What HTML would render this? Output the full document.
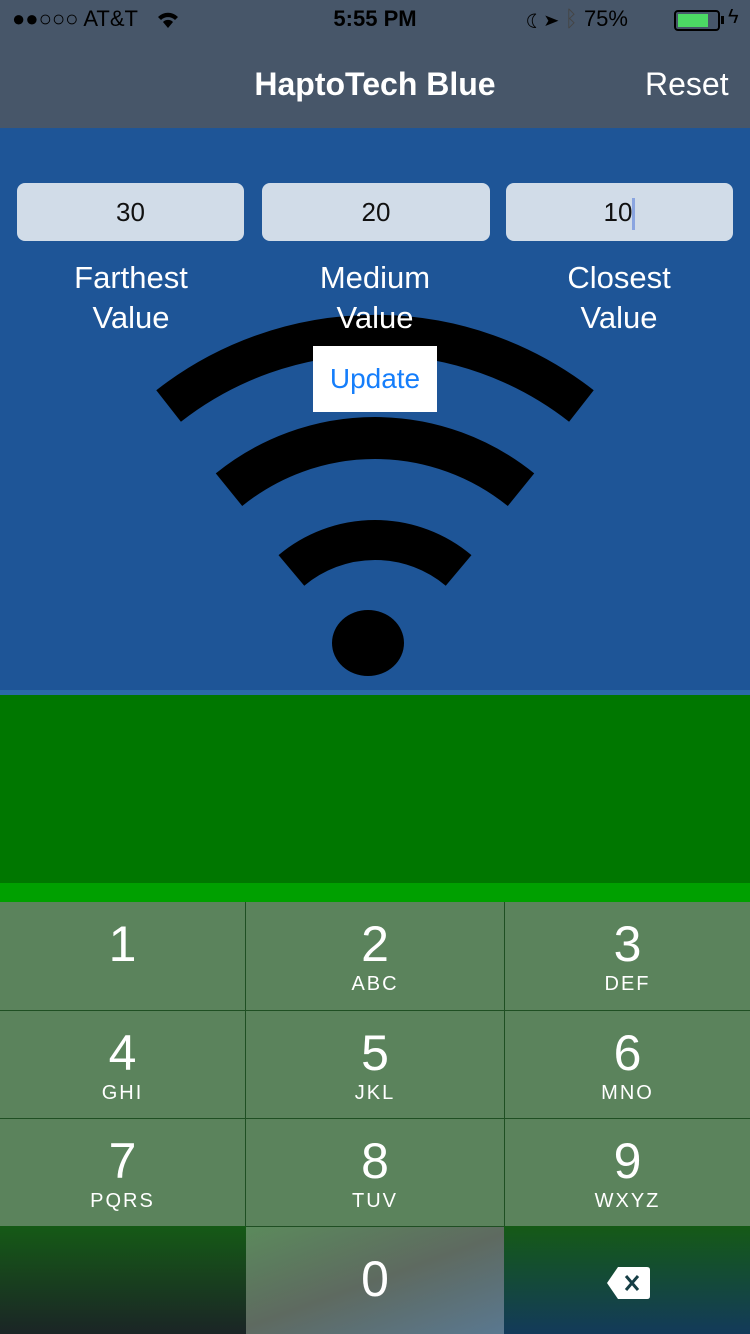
<!DOCTYPE html>
<html><head><meta charset="utf-8"><style>
*{margin:0;padding:0;box-sizing:border-box}
body{width:750px;height:1334px;overflow:hidden;font-family:"Liberation Sans",sans-serif;position:relative;background:#1e5597}
.abs{position:absolute}
.status{left:0;top:0;width:750px;height:128px;background:#475669}
.fld{top:183px;height:58px;background:#d1dce8;border-radius:8px;font-size:26px;text-align:center;line-height:58px;color:#111}
.lbl{top:258px;width:230px;text-align:center;color:#fff;font-size:31px;line-height:40px}
.key{background:#5b835c;color:#fff;text-align:center}
.key .n{font-size:50px;line-height:50px;margin-top:17px}
.key .l{font-size:20px;letter-spacing:2px;margin-top:4px}
</style></head><body>
<div class="abs status"></div>
<div class="abs" style="left:12px;top:6px;font-size:22px;color:#000">●●○○○ AT&amp;T</div>
<svg class="abs" style="left:156px;top:10px" width="24" height="20" viewBox="0 0 24 20"><path d="M2 7 A14 14 0 0 1 22 7 L19 10 A10 10 0 0 0 5 10Z M7 12 A7 7 0 0 1 17 12 L12 18Z" fill="#000"/></svg>
<div class="abs" style="left:0;width:750px;top:6px;text-align:center;font-size:22px;font-weight:bold;color:#000">5:55 PM</div>
<div class="abs" style="left:526px;top:6px;font-size:22px;color:#000">☾ ➤ <span style="color:#444">ᛒ</span> 75%</div>
<div class="abs" style="left:674px;top:10px;width:46px;height:21px;border:2px solid #000;border-radius:4px;padding:2px"><div style="width:30px;height:13px;background:#4cd964"></div></div>
<div class="abs" style="left:721px;top:16px;width:3px;height:8px;background:#000"></div>
<div class="abs" style="left:728px;top:6px;font-size:20px">ϟ</div>
<div class="abs" style="left:0;width:750px;top:66px;text-align:center;font-size:32px;font-weight:bold;color:#fff">HaptoTech Blue</div>
<div class="abs" style="left:645px;top:66px;font-size:32px;color:#fff">Reset</div>
<div class="abs fld" style="left:17px;width:227px">30</div>
<div class="abs fld" style="left:262px;width:228px">20</div>
<div class="abs fld" style="left:506px;width:227px">10<span style="display:inline-block;width:3px;height:32px;background:#8aa5e0;vertical-align:middle"></span></div>
<svg class="abs" style="left:0;top:0" width="750" height="700">
<g fill="none" stroke="#000" stroke-width="40">
<path d="M168.6 406 A335 335 0 0 1 581.4 406"/>
<path d="M229 489.7 A232 232 0 0 1 521 489.7" stroke-width="42"/>
<path d="M291.4 570.4 A130 130 0 0 1 458.6 570.4"/>
</g>
<ellipse cx="368" cy="643" rx="36" ry="33" fill="#000"/>
</svg>
<div class="abs lbl" style="left:16px">Farthest<br>Value</div>
<div class="abs lbl" style="left:260px">Medium<br>Value</div>
<div class="abs lbl" style="left:504px">Closest<br>Value</div>
<div class="abs" style="left:313px;top:346px;width:124px;height:66px;background:#fff;color:#157efb;font-size:28px;text-align:center;line-height:66px">Update</div>
<div class="abs" style="left:0;top:690px;width:750px;height:5px;background:#2a6aa8"></div>
<div class="abs" style="left:0;top:695px;width:750px;height:188px;background:#007700"></div>
<div class="abs" style="left:0;top:883px;width:750px;height:19px;background:#00a000"></div>
<div class="abs" style="left:0;top:902px;width:750px;height:432px;background:#1f4f23"></div>
<div class="abs key" style="left:0;top:902px;width:245px;height:108px"><div class="n">1</div></div>
<div class="abs key" style="left:246px;top:902px;width:258px;height:108px"><div class="n">2</div><div class="l">ABC</div></div>
<div class="abs key" style="left:505px;top:902px;width:245px;height:108px"><div class="n">3</div><div class="l">DEF</div></div>
<div class="abs key" style="left:0;top:1011px;width:245px;height:107px"><div class="n">4</div><div class="l">GHI</div></div>
<div class="abs key" style="left:246px;top:1011px;width:258px;height:107px"><div class="n">5</div><div class="l">JKL</div></div>
<div class="abs key" style="left:505px;top:1011px;width:245px;height:107px"><div class="n">6</div><div class="l">MNO</div></div>
<div class="abs key" style="left:0;top:1119px;width:245px;height:107px"><div class="n">7</div><div class="l">PQRS</div></div>
<div class="abs key" style="left:246px;top:1119px;width:258px;height:107px"><div class="n">8</div><div class="l">TUV</div></div>
<div class="abs key" style="left:505px;top:1119px;width:245px;height:107px"><div class="n">9</div><div class="l">WXYZ</div></div>
<div class="abs" style="left:0;top:1226px;width:246px;height:108px;background:linear-gradient(#155a16,#1b2526)"></div>
<div class="abs" style="left:246px;top:1227px;width:258px;height:107px;background:linear-gradient(160deg,#5b8a5c,#5e6a60 50%,#5a7890)"></div>
<div class="abs" style="left:246px;top:1250px;width:258px;text-align:center;color:#fff;font-size:50px">0</div>
<div class="abs" style="left:504px;top:1226px;width:246px;height:108px;background:linear-gradient(#155a16,#133a5a)"></div>
<svg class="abs" style="left:606px;top:1266px" width="46" height="34" viewBox="0 0 46 34"><path d="M12 1 H41 Q44 1 44 4 V30 Q44 33 41 33 H12 L1 17Z" fill="#fff"/><path d="M20 10 L32 24 M32 10 L20 24" stroke="#163e45" stroke-width="3"/></svg>
</body></html>
